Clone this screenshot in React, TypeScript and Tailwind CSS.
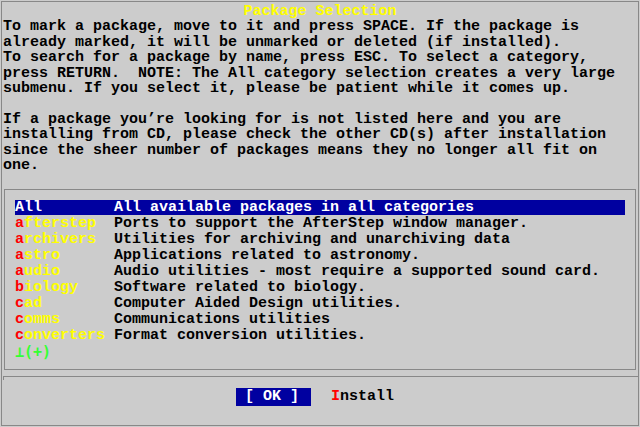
const intro = [
  'To mark a package, move to it and press SPACE. If the package is',
  'already marked, it will be unmarked or deleted (if installed).',
  'To search for a package by name, press ESC. To select a category,',
  'press RETURN.  NOTE: The All category selection creates a very large',
  'submenu. If you select it, please be patient while it comes up.',
  '',
  'If a package you\u2019re looking for is not listed here and you are',
  'installing from CD, please check the other CD(s) after installation',
  'since the sheer number of packages means they no longer all fit on',
  'one.',
];

const categories = [
  { name: 'All', desc: 'All available packages in all categories' },
  { name: 'afterstep', desc: 'Ports to support the AfterStep window manager.' },
  { name: 'archivers', desc: 'Utilities for archiving and unarchiving data' },
  { name: 'astro', desc: 'Applications related to astronomy.' },
  { name: 'audio', desc: 'Audio utilities - most require a supported sound card.' },
  { name: 'biology', desc: 'Software related to biology.' },
  { name: 'cad', desc: 'Computer Aided Design utilities.' },
  { name: 'comms', desc: 'Communications utilities' },
  { name: 'converters', desc: 'Format conversion utilities.' },
];

function CategoryRow({ name, desc, selected }: { name: string; desc: string; selected: boolean }) {
  if (selected) {
    return (
      <div className="flex h-4 w-[610px] pb-px bg-[#0000a0] bg-clip-content text-white leading-[15px]">
        <span className="w-[99px] shrink-0">{name}</span>
        <span>{desc}</span>
      </div>
    );
  }
  return (
    <div className="flex h-4 leading-4">
      <span className="w-[99px] shrink-0">
        <span className="text-[#ff0000]">{name[0]}</span>
        <span className="text-[#ffff00]">{name.slice(1)}</span>
      </span>
      <span className="text-black">{desc}</span>
    </div>
  );
}

export default function App() {
  return (
    <div
      className="w-[640px] h-[427px] overflow-hidden bg-[#cccccc] p-px text-[15px] font-bold text-black whitespace-pre"
      style={{ fontFamily: '"Liberation Mono", "DejaVu Sans Mono", monospace' }}
    >
      <div className="h-[425px] border border-[#888888]">
        {/* header + help text */}
        <div className="h-[187px] pt-[2px] leading-[15.4px]">
          <div className="text-center text-[#ffff00]">Package Selection</div>
          <div className="pl-px">
            {intro.map((line, i) => (
              <div key={i} className="h-[15.4px]">{line}</div>
            ))}
          </div>
        </div>

        {/* category menu */}
        <div className="ml-[2px] w-[632px] h-[181px] border border-[#888888] pt-[10px] pl-[10px]">
          {categories.map((c, i) => (
            <CategoryRow key={c.name} name={c.name} desc={c.desc} selected={i === 0} />
          ))}
          <div className="h-4 leading-4 text-[#33ff33]" style={{ fontFamily: '"DejaVu Sans Mono", "Liberation Mono", monospace' }}>
            {'\u22a5(+)'}
          </div>
        </div>

        {/* button separator */}
        <div className="mt-[6px] ml-px w-[635px] h-[4px] border-t border-l border-[#888888]" />

        <div className="mt-[8px] flex items-start">
          <div className="ml-[234px] w-[75px] h-[18px] bg-[#0000a0] pl-[9px] leading-[18px] text-white">[ OK ]</div>
          <div className="ml-[20px] leading-[18px]">
            <span className="text-[#ff0000]">I</span>nstall
          </div>
        </div>
      </div>
    </div>
  );
}
